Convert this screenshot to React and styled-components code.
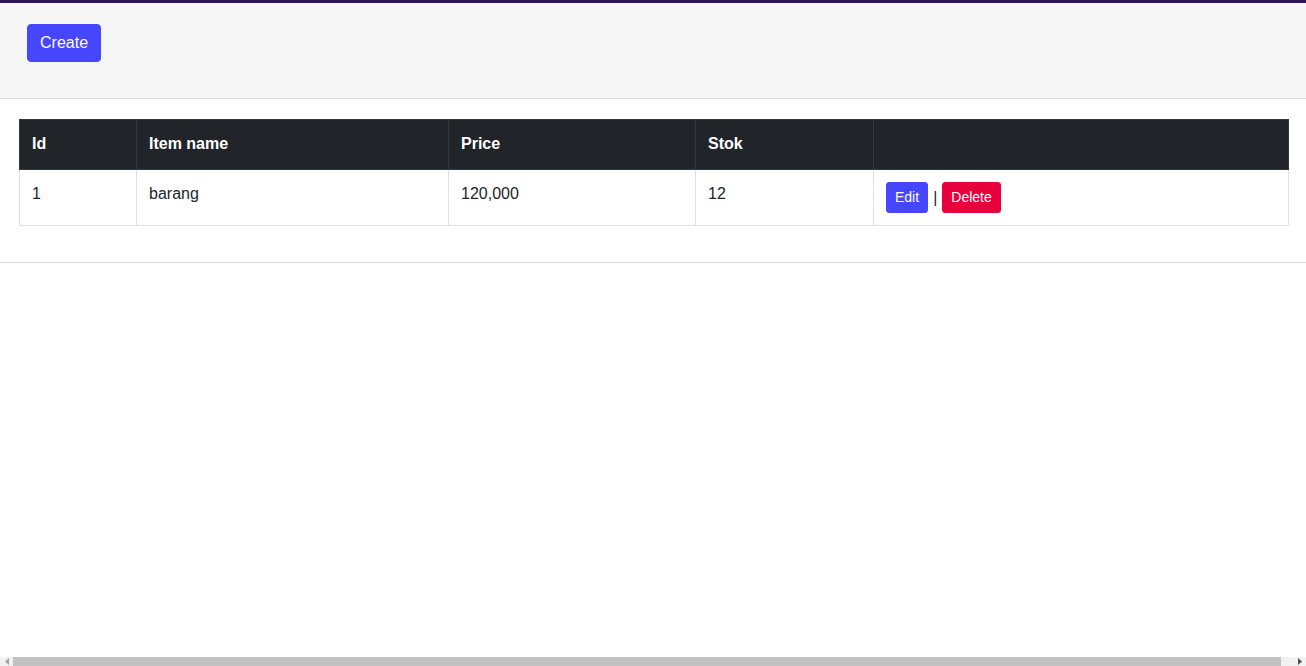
import React from "react";
import styled, { createGlobalStyle } from "styled-components";

const GlobalStyle = createGlobalStyle`
  html, body { margin: 0; padding: 0; }
  body {
    font-family: "Liberation Sans", Arial, sans-serif;
    font-size: 16px;
    line-height: 1.5;
    color: #212529;
    background: #fff;
  }
  * { box-sizing: border-box; }
`;

const Page = styled.div`
  width: 100%;
  border-top: 3px solid #2a1657;
`;

const Header = styled.header`
  background: #f6f6f6;
  border-bottom: 1px solid #dcdcdc;
  padding: 21px 27px 36px;
`;

const Button = styled.button`
  font-family: "Liberation Sans", Arial, sans-serif;
  color: #fff;
  background: ${(p) => (p.$variant === "danger" ? "#e8003d" : "#4646ff")};
  border: 1px solid ${(p) => (p.$variant === "danger" ? "#e8003d" : "#4646ff")};
  border-radius: ${(p) => (p.$small ? "3px" : "4px")};
  font-size: ${(p) => (p.$small ? "14px" : "16px")};
  line-height: ${(p) => (p.$small ? "21px" : "24px")};
  padding: ${(p) => (p.$small ? "4px 8px" : "6px 12px")};
  cursor: pointer;
  display: inline-block;
`;

const Section = styled.section`
  padding: 20px 19px 36px;
  border-bottom: 1px solid #dcdcdc;
`;

const Table = styled.table`
  width: 1269px;
  border-collapse: collapse;
  table-layout: fixed;
`;

const HeadCell = styled.th`
  background: #212529;
  color: #fff;
  font-weight: bold;
  text-align: left;
  padding: 12px 12px 13px;
  border: 1px solid #32383e;
  vertical-align: bottom;
`;

const Cell = styled.td`
  padding: 12px 12px 12px;
  border: 1px solid #dee2e6;
  vertical-align: top;
`;

const Actions = styled.div`
  display: flex;
  align-items: center;
  gap: 4px;
`;

const Sep = styled.span`
  font-size: 16px;
  color: #212529;
  margin: 0 1px;
`;

const ScrollBar = styled.div`
  position: fixed;
  left: 0;
  right: 0;
  bottom: 0;
  height: 9px;
  background: #f1f1f1;
  display: flex;
  align-items: center;
`;

const Arrow = styled.div`
  width: 13px;
  display: flex;
  align-items: center;
  justify-content: center;
`;

const Thumb = styled.div`
  flex: 1;
  height: 9px;
  background: #c1c1c1;
  margin-right: 12px;
`;

const widths = [117, 312, 247, 178, 415];

export default function App() {
  return (
    <>
      <GlobalStyle />
      <Page>
        <Header>
          <Button>Create</Button>
        </Header>
        <Section>
          <Table>
            <colgroup>
              {widths.map((w, i) => (
                <col key={i} style={{ width: w }} />
              ))}
            </colgroup>
            <thead>
              <tr>
                <HeadCell>Id</HeadCell>
                <HeadCell>Item name</HeadCell>
                <HeadCell>Price</HeadCell>
                <HeadCell>Stok</HeadCell>
                <HeadCell></HeadCell>
              </tr>
            </thead>
            <tbody>
              <tr>
                <Cell>1</Cell>
                <Cell>barang</Cell>
                <Cell>120,000</Cell>
                <Cell>12</Cell>
                <Cell>
                  <Actions>
                    <Button $small>Edit</Button>
                    <Sep>|</Sep>
                    <Button $small $variant="danger">Delete</Button>
                  </Actions>
                </Cell>
              </tr>
            </tbody>
          </Table>
        </Section>
      </Page>
      <ScrollBar>
        <Arrow>
          <svg width="4" height="7" viewBox="0 0 4 7">
            <path d="M4 0 L0 3.5 L4 7 Z" fill="#a3a3a3" />
          </svg>
        </Arrow>
        <Thumb />
        <Arrow>
          <svg width="4" height="7" viewBox="0 0 4 7">
            <path d="M0 0 L4 3.5 L0 7 Z" fill="#505050" />
          </svg>
        </Arrow>
      </ScrollBar>
    </>
  );
}
